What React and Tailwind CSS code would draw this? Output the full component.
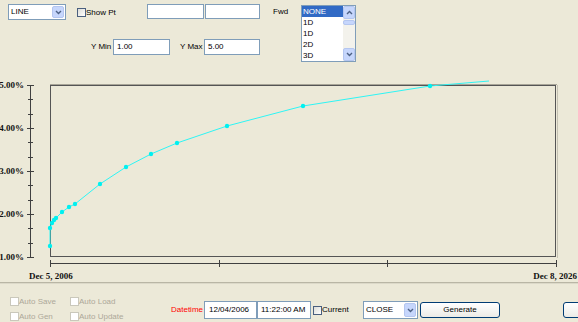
import React from 'react';

const points = [
  [50, 246], [50, 228], [52, 223], [54, 220], [56, 218], [62, 212], [69, 207], [75, 204],
  [100, 184], [126, 167], [151, 154], [177, 143], [227, 126], [303, 106], [430, 86],
];

function Chevron({ up }) {
  return (
    <svg width="7" height="5" viewBox="0 0 7 5">
      <path d={up ? 'M1 4 L3.5 1.5 L6 4' : 'M1 1 L3.5 3.5 L6 1'} fill="none" stroke="#4d6185" strokeWidth="1.4" />
    </svg>
  );
}

function Combo({ value, className }) {
  return (
    <div className={`flex shrink-0 border border-[#7f9db9] bg-white ${className}`}>
      <span className="flex-1 pl-[2px] self-center">{value}</span>
      <span className="w-[12px] m-[1px] rounded-[2px] bg-[#c6d6fc] border border-[#b4c6f0] flex items-center justify-center">
        <Chevron />
      </span>
    </div>
  );
}

function Field({ value, className }) {
  return (
    <div className={`flex shrink-0 items-center border border-[#7f9db9] bg-white pl-[3px] ${className}`}>{value}</div>
  );
}

function Check({ disabled }) {
  return (
    <span
      className={`w-[9px] h-[9px] shrink-0 border ${
        disabled ? 'border-[#cac8bb] bg-white' : 'border-[#4a5f7e] bg-linear-to-br from-[#dcdcd7] to-white'
      }`}
    />
  );
}

function Chart() {
  const ticks = Array.from({ length: 13 }, (_, i) => 85 + (i * 172) / 12);
  const labels = ['5.00%', '4.00%', '3.00%', '2.00%', '1.00%'];
  return (
    <svg width="578" height="212" viewBox="0 70 578 212" className="block">
      {/* y axis */}
      <line x1="30.5" y1="85" x2="30.5" y2="257" stroke="#404040" />
      {ticks.map((y, i) => (
        <line
          key={i}
          x1={i % 3 === 0 ? 27 : 28}
          x2={i % 3 === 0 ? 34 : 33}
          y1={Math.round(y) + 0.5}
          y2={Math.round(y) + 0.5}
          stroke="#404040"
        />
      ))}
      {labels.map((t, i) => (
        <text
          key={t}
          x="24"
          y={85 + i * 43 + 3}
          textAnchor="end"
          fontFamily="'Liberation Serif', serif"
          fontWeight="bold"
          fontSize="9"
          fill="#111"
        >
          {t}
        </text>
      ))}

      {/* plot box */}
      <line x1="50" y1="84.5" x2="557" y2="84.5" stroke="#a8a598" />
      <rect x="50.5" y="85.5" width="505" height="171" fill="none" stroke="#555" />
      <line x1="557.5" y1="85" x2="557.5" y2="258" stroke="#c4c1b3" />

      {/* x axis */}
      <line x1="50" y1="263.5" x2="556" y2="263.5" stroke="#404040" />
      {[50, 219, 387, 556].map((x) => (
        <line key={x} x1={x + 0.5} x2={x + 0.5} y1="260" y2="267" stroke="#404040" />
      ))}
      <text x="29" y="279" fontFamily="'Liberation Serif', serif" fontWeight="bold" fontSize="9" fill="#111">
        Dec 5, 2006
      </text>
      <text x="577" y="279" textAnchor="end" fontFamily="'Liberation Serif', serif" fontWeight="bold" fontSize="9" fill="#111">
        Dec 8, 2026
      </text>

      {/* series */}
      <polyline
        points={[...points, [489, 81]].map((p) => p.join(',')).join(' ')}
        fill="none"
        stroke="#2ef5f5"
        strokeWidth="1"
      />
      {points.map(([x, y], i) => (
        <circle key={i} cx={x} cy={y} r="2.2" fill="#00f0f0" />
      ))}
    </svg>
  );
}

export default function App() {
  return (
    <div className="w-[578px] h-[322px] overflow-hidden bg-[#ece9d8] text-[8px] text-black font-['Liberation_Sans',Arial,sans-serif] leading-none whitespace-nowrap">
      {/* Top controls */}
      <div className="flex items-start h-[70px]">
        <div className="w-[268px] shrink-0">
          <div className="flex items-start pt-[4px] pl-[8px]">
            <Combo value="LINE" className="w-[58px] h-[16px]" />
            <label className="ml-[11px] mt-[4px] w-[70px] shrink-0 flex items-center">
              <Check />
              <span>Show Pt</span>
            </label>
            <Field value="" className="w-[57px] h-[15px]" />
            <Field value="" className="ml-[1px] w-[55px] h-[15px]" />
          </div>
          <div className="flex items-center mt-[19px] pl-[91px]">
            <span className="w-[22px] shrink-0">Y Min</span>
            <Field value="1.00" className="w-[57px] h-[16px]" />
            <span className="ml-[10px] w-[24px] shrink-0">Y Max</span>
            <Field value="5.00" className="w-[56px] h-[16px]" />
          </div>
        </div>
        <span className="ml-[5px] mt-[8px] w-[28px] shrink-0">Fwd</span>
        <div className="mt-[5px] w-[55px] h-[57px] shrink-0 flex border border-[#7f9db9] bg-white overflow-hidden">
          <div className="flex-1 flex flex-col">
            <span className="h-[12px] flex items-center pl-[1px] bg-[#316ac5] text-white">NONE</span>
            <span className="h-[12px] flex items-center pl-[1px]">1D</span>
            <span className="h-[12px] flex items-center pl-[1px]">1D</span>
            <span className="h-[12px] flex items-center pl-[1px]">2D</span>
            <span className="h-[12px] flex items-center pl-[1px]">3D</span>
          </div>
          <div className="w-[12px] flex flex-col bg-[#f3f2ec]">
            <span className="h-[13px] rounded-[2px] bg-[#c6d6fc] border border-[#b4c6f0] flex items-center justify-center">
              <Chevron up />
            </span>
            <span className="h-[5px] mt-[1px] rounded-[2px] bg-[#c6d6fc] border border-[#b4c6f0]" />
            <span className="flex-1" />
            <span className="h-[13px] rounded-[2px] bg-[#c6d6fc] border border-[#b4c6f0] flex items-center justify-center">
              <Chevron />
            </span>
          </div>
        </div>
      </div>

      <Chart />

      <div className="h-[1px] bg-[#b9b6a5]" />
      <div className="h-[1px] bg-[#dcd9c9]" />

      {/* Bottom controls */}
      <div className="flex items-start">
        <div className="w-[171px] shrink-0 pl-[10px] pt-[13px] grid grid-cols-[60px_60px] gap-y-[6px] text-[#aca899]">
          <label className="flex items-center h-[9px]"><Check disabled /><span>Auto Save</span></label>
          <label className="flex items-center h-[9px]"><Check disabled /><span>Auto Load</span></label>
          <label className="flex items-center h-[9px]"><Check disabled /><span>Auto Gen</span></label>
          <label className="flex items-center h-[9px]"><Check disabled /><span>Auto Update</span></label>
        </div>
        <div className="flex items-center shrink-0 mt-[17px]">
          <span className="w-[33px] shrink-0 text-[#ff0000]">Datetime</span>
          <Field value="12/04/2006" className="w-[53px] h-[18px] pl-[4px]" />
          <Field value="11:22:00 AM" className="w-[54px] h-[18px]" />
          <label className="ml-[2px] w-[50px] shrink-0 flex items-center">
            <Check />
            <span>Current</span>
          </label>
          <Combo value="CLOSE" className="w-[55px] h-[18px]" />
          <button className="ml-[2px] w-[80px] h-[16px] shrink-0 rounded-[3px] border border-[#003c74] bg-linear-to-b from-white to-[#ecebe6] text-center">
            Generate
          </button>
          <button className="ml-[63px] w-[40px] h-[16px] shrink-0 rounded-[3px] border border-[#003c74] bg-linear-to-b from-white to-[#ecebe6]" />
        </div>
      </div>
    </div>
  );
}
